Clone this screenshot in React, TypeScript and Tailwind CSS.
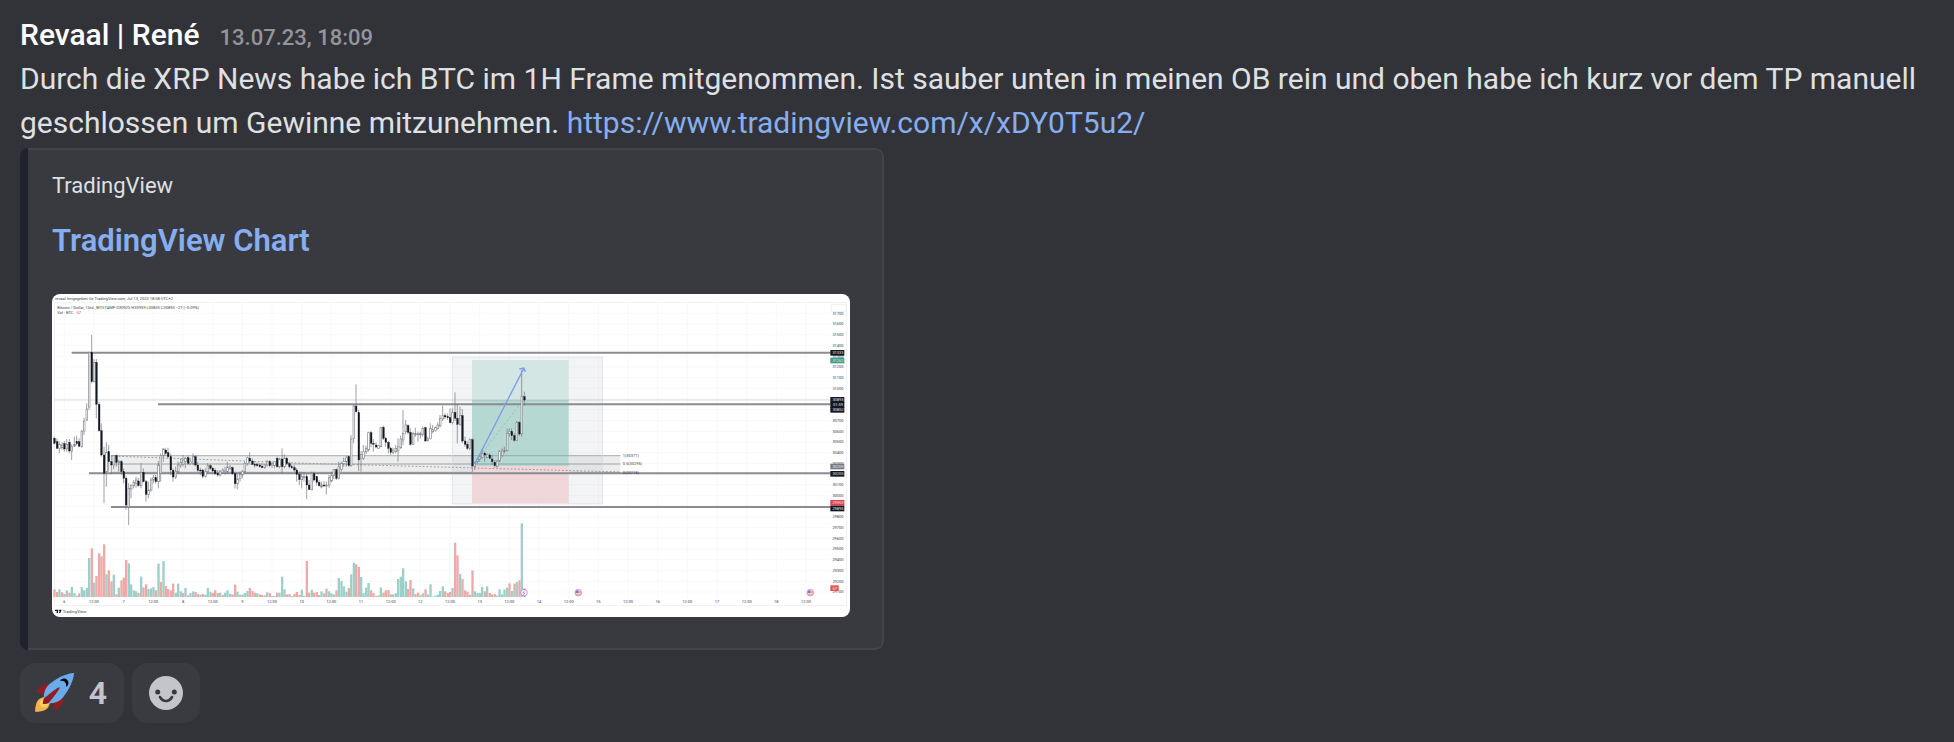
import React from "react";

type Candle = [open: number, high: number, low: number, close: number];

// Hourly candles, y grows downwards
const candles: Candle[] = [
  [460, 455, 478, 475], [470, 460, 492, 490], [490, 470, 505, 478], [488, 472, 495, 480],
  [476, 468, 500, 492], [492, 462, 500, 478], [472, 462, 505, 498], [498, 478, 525, 485],
  [483, 455, 486, 478], [470, 452, 482, 476], [470, 460, 485, 484], [484, 435, 488, 440],
  [438, 398, 450, 408], [405, 355, 408, 372], [366, 200, 375, 203], [203, 150, 295, 290],
  [290, 222, 292, 232], [232, 222, 400, 358], [358, 350, 440, 437], [437, 415, 515, 510],
  [510, 485, 655, 565], [560, 472, 605, 502], [500, 480, 560, 530], [530, 510, 568, 540],
  [540, 510, 552, 512], [512, 508, 545, 532], [532, 525, 560, 530], [530, 525, 570, 560],
  [560, 550, 595, 580], [580, 572, 675, 660], [666, 595, 720, 610], [612, 600, 640, 600],
  [602, 585, 610, 592], [595, 575, 608, 585], [588, 578, 605, 602], [602, 535, 610, 562],
  [562, 550, 592, 590], [590, 585, 650, 628], [628, 590, 640, 615], [615, 578, 620, 585],
  [585, 570, 595, 578], [578, 570, 596, 590], [590, 528, 610, 540], [565, 505, 590, 512],
  [512, 490, 530, 492], [495, 490, 512, 505], [503, 488, 520, 515], [515, 505, 570, 555],
  [556, 550, 590, 576], [576, 545, 582, 560], [560, 530, 565, 540], [540, 520, 548, 532],
  [538, 510, 545, 525], [530, 515, 550, 520], [518, 512, 540, 535], [535, 520, 540, 530],
  [535, 505, 540, 515], [515, 510, 545, 540], [540, 530, 560, 556], [555, 548, 570, 558],
  [555, 552, 580, 574], [574, 550, 578, 560], [560, 535, 565, 542], [542, 538, 555, 550],
  [550, 545, 562, 558], [556, 550, 570, 566], [566, 555, 575, 570], [570, 555, 575, 560],
  [562, 550, 566, 555], [562, 545, 568, 558], [560, 530, 566, 546], [550, 540, 555, 546],
  [548, 545, 570, 566], [566, 560, 610, 596], [596, 565, 612, 582], [580, 560, 590, 568],
  [570, 555, 580, 560], [560, 530, 565, 535], [535, 515, 542, 518], [520, 502, 535, 528],
  [528, 520, 540, 538], [538, 530, 548, 540], [538, 532, 545, 542], [540, 535, 548, 545],
  [544, 535, 550, 548], [548, 538, 552, 540], [540, 525, 545, 530], [530, 525, 545, 542],
  [540, 530, 548, 535], [542, 530, 550, 530], [520, 515, 548, 545], [545, 518, 550, 522],
  [522, 490, 565, 545], [545, 508, 550, 520], [520, 515, 540, 536], [536, 530, 550, 545],
  [545, 540, 552, 548], [548, 540, 560, 555], [555, 550, 590, 568], [568, 560, 600, 584],
  [584, 560, 610, 575], [578, 562, 590, 575], [575, 565, 642, 600], [600, 585, 615, 614],
  [614, 560, 616, 566], [566, 560, 590, 585], [575, 575, 602, 592], [592, 585, 605, 602],
  [606, 590, 610, 600], [600, 588, 606, 602], [602, 590, 628, 600], [600, 570, 608, 578],
  [588, 560, 592, 572], [572, 552, 582, 554], [554, 550, 585, 580], [580, 530, 583, 545],
  [553, 530, 560, 535], [535, 518, 545, 530], [530, 512, 545, 518], [515, 512, 545, 542],
  [542, 450, 545, 462], [460, 360, 475, 363], [363, 298, 383, 380], [383, 375, 558, 525],
  [520, 498, 560, 508], [520, 480, 525, 500], [500, 482, 508, 490], [495, 440, 500, 443],
  [443, 438, 487, 475], [475, 462, 500, 478], [480, 472, 490, 486], [490, 480, 492, 482],
  [485, 425, 487, 428], [427, 422, 465, 460], [460, 455, 485, 472], [472, 468, 505, 490],
  [490, 485, 510, 502], [502, 488, 508, 495], [500, 480, 505, 490], [498, 460, 530, 485],
  [488, 452, 492, 462], [465, 375, 480, 445], [440, 405, 448, 420], [422, 418, 448, 442],
  [442, 430, 482, 478], [478, 440, 480, 445], [450, 428, 455, 445], [448, 440, 470, 446],
  [450, 440, 460, 445], [448, 425, 455, 430], [428, 425, 470, 468], [466, 455, 470, 462],
  [460, 415, 463, 430], [440, 420, 445, 434], [436, 425, 440, 427], [430, 412, 434, 420],
  [422, 390, 428, 400], [402, 362, 408, 392], [392, 385, 402, 396], [395, 385, 405, 398],
  [398, 370, 415, 413], [412, 370, 418, 382], [382, 322, 408, 400], [400, 357, 475, 418],
  [418, 365, 422, 392], [392, 372, 475, 468], [468, 455, 485, 478], [478, 470, 495, 490],
  [490, 460, 496, 464], [464, 460, 562, 543], [545, 530, 555, 535], [530, 518, 535, 522],
  [522, 510, 530, 515], [518, 492, 522, 505], [505, 500, 530, 510], [518, 505, 520, 508],
  [510, 505, 522, 520], [522, 510, 540, 530], [532, 525, 548, 542], [545, 525, 548, 528],
  [528, 495, 532, 500], [512, 490, 518, 498], [500, 485, 505, 495], [497, 430, 500, 445],
  [445, 430, 455, 440], [440, 430, 465, 452], [452, 445, 470, 466], [466, 408, 468, 412],
  [412, 408, 452, 447], [445, 255, 455, 335], [335, 320, 362, 345],
];

// Volume per candle, negative for a falling hour
const volumes = [
  -23, -15, 23, -14, -9, 20, -13, 30, 12, 4, -11, 30, 20, 27, 117, -146, 43, -63, -131, -122,
  -158, 68, -80, -47, 67, -8, 28, -50, -58, -111, 101, 38, 20, 17, -12, 61, -29, -38, 24, 26,
  30, -20, 100, -45, 108, -33, -24, -20, -40, 13, 40, 17, -12, 27, -5, 12, 17, -15, -9, 7,
  -9, 7, 27, 16, -12, -20, -12, 13, -6, 13, 20, 10, -8, -37, 16, 7, 7, 12, 18, -27,
  -18, -13, 11, -8, -6, -5, 14, -12, 3, 3, -13, 13, 61, 23, -8, -9, 3, -9, -15, -6,
  22, 3, -108, -13, 22, -13, -15, -6, 17, 11, -25, 17, 11, 8, -20, 57, 48, 32, 16, -27,
  68, 103, -98, -90, 60, 12, 28, 42, -20, -12, -3, 5, 29, -13, -20, -21, -8, 8, 11, 54,
  61, 86, 47, -24, -51, 26, -9, -13, 5, 11, -23, 8, 38, 2, 4, 7, 18, 32, -17, -12,
  -15, 27, -163, -125, 69, -54, -20, -16, 7, -80, 17, 12, 12, 30, -17, 32, -12, -8, -8, 4,
  23, 8, 23, 28, -41, 18, -40, 45, -50, 221, -26,
];

const prices = Array.from({ length: 27 }, (_, i) => 31700 - i * 100);
// Prices hidden behind a tag on the axis
const coveredPrices = [30900, 30800, 30200, 29900];

const columns = Array.from({ length: 26 }, (_, i) => i);

const levels = [
  { x: 95, y: 203 },
  { x: 354, y: 358 },
  { x: 147, y: 565 },
  { x: 213, y: 666 },
];

const tags = [
  { y: 195, text: "31333", fill: "#131722" },
  { y: 218, text: "31262", fill: "#3f9d85" },
  { y: 336, text: "30893", fill: "#131722" },
  { y: 351, text: "51:59", fill: "#131722" },
  { y: 366, text: "30852", fill: "#131722" },
  { y: 536, text: "30259", fill: "#787b86" },
  { y: 558, text: "30205", fill: "#131722" },
  { y: 645, text: "29953", fill: "#e5404c" },
  { y: 662, text: "29895", fill: "#131722" },
];

const candleX = (index: number) => Math.round(43.3 + index * 7.417);

const FlagMarker: React.FC<{ x: number }> = ({ x }) => (
  <g>
    <circle cx={x} cy={923} r={10} fill="#fff" stroke="#e0566a" strokeWidth={2} />
    <path d={`M${x - 7} 919h14M${x - 8} 923h16M${x - 7} 928h14`} stroke="#e0566a" strokeWidth={2} />
    <path d={`M${x - 8} 924v-4q2-5 8-5v9z`} fill="#4a86e8" />
  </g>
);

const TradingChart: React.FC = () => (
  <svg
    viewBox="36 27 2394 969"
    role="img"
    aria-label="Bitcoin / Dollar chart"
    className="block w-full rounded-lg bg-white font-['Roboto',sans-serif]"
  >
    {/* Grid */}
    <g stroke="#f6f6f7" strokeWidth={2}>
      {columns.map((column) => (
        <path key={column} d={`M${73 + column * 89} 53V942`} />
      ))}
      {prices.map((price, i) => (
        <path key={price} d={`M44 ${Math.round(85 + i * 32.15)}H2372`} />
      ))}
    </g>
    <rect x={44} y={53} width={2376} height={908} fill="none" stroke="#ececee" strokeWidth={2} />

    {/* Fibonacci zone */}
    <rect x={214} y={512} width={1527} height={50} fill="#eceeed" />
    <path d="M214 512H1741M214 537H1741M214 562H1741" stroke="#b9bbba" strokeWidth={4} />

    {/* Range box and position */}
    <rect x={1237} y={216} width={451} height={441} fill="#9598a1" fillOpacity={0.11} stroke="#d9d9e6" strokeWidth={2} />
    <rect x={1296} y={225} width={290} height={120} fill="#d3e6e4" />
    <rect x={1296} y={345} width={290} height={198} fill="#b6d8d2" />
    <rect x={1296} y={543} width={290} height={112} fill="#efd6d9" />
    <path d="M1296 512H1586M1296 537H1586" stroke="#131722" strokeOpacity={0.18} strokeWidth={4} />
    <path d="M44 345H2372" stroke="#131722" strokeOpacity={0.14} strokeWidth={3} />
    <path d="M214 513L800 535L1741 561" stroke="#9a9a9a" strokeWidth={3} strokeDasharray="5 6" fill="none" />
    <path d="M1296 543L1450 345" stroke="#8fb3a8" strokeWidth={2} strokeDasharray="7 6" />

    {/* Volume */}
    {volumes.map((volume, i) => (
      <rect
        key={i}
        x={candleX(i) - 3}
        y={936 - Math.abs(volume)}
        width={7}
        height={Math.abs(volume)}
        fill={volume < 0 ? "#eeaaa8" : "#9dd0c9"}
      />
    ))}

    {/* Price levels */}
    {levels.map((level) => (
      <path
        key={level.y}
        d={`M${level.x} ${level.y}H2372`}
        stroke="#8b8c93"
        strokeWidth={6}
      />
    ))}

    {/* Candles */}
    {candles.map(([open, high, low, close], i) => {
      const falling = close > open;
      return (
        <g key={i}>
          <path d={`M${candleX(i)} ${high}V${low}`} stroke="#6f7178" strokeWidth={2} />
          <rect
            x={candleX(i) - 2}
            y={Math.min(open, close)}
            width={5}
            height={Math.max(Math.abs(close - open), 3)}
            fill={falling ? "#131722" : "#fff"}
            stroke={falling ? "#131722" : "#85878d"}
            strokeWidth={falling ? 1 : 2}
          />
        </g>
      );
    })}

    <path
      d="M1304 538L1451 251M1438 252L1452 249L1456 261"
      fill="none"
      stroke="#7f9bea"
      strokeWidth={4}
    />

    {/* Legend */}
    <g fill="#40434c" fontSize={12}>
      <text x={45} y={45}>revaal freigegeben für TradingView.com, Jul 13, 2023 18:08 UTC+2</text>
      <text x={52} y={71}>Bitcoin / Dollar, 1Std., BITSTAMP  O30925  H30959  L30830  C30893  −27 (−0.09%)</text>
      <text x={52} y={87}>
        Vol · BTC <tspan fill="#e5404c" dx={6}>57</tspan>
      </text>
      <text x={1748} y={516}>1(30371)</text>
      <text x={1748} y={541}>0.5(30295)</text>
      <text x={1748} y={566}>0(30218)</text>
    </g>

    {/* Time axis */}
    <g fill="#40434c" fontSize={12} textAnchor="middle">
      {columns.map((column) => (
        <text key={column} x={73 + column * 89} y={953}>
          {column % 2 === 0 ? 6 + column / 2 : "12:00"}
        </text>
      ))}
    </g>

    {/* Price axis */}
    <rect x={2374} y={58} width={44} height={22} rx={3} fill="#fff" stroke="#e6e6e8" strokeWidth={2} />
    <g fontSize={12} textAnchor="middle">
      {prices.map((price, i) =>
        coveredPrices.includes(price) ? null : (
          <text key={price} x={2394} y={Math.round(89 + i * 32.15)} fill="#40434c">
            {price}
          </text>
        )
      )}
      {tags.map((tag) => (
        <g key={tag.y}>
          <rect x={2371} y={tag.y} width={42} height={17} fill={tag.fill} />
          <text x={2394} y={tag.y + 13} fill="#e4e5e8">{tag.text}</text>
        </g>
      ))}
      <rect x={2371} y={901} width={25} height={17} fill="#e0544f" />
      <text x={2384} y={914} fill="#fff">57</text>
    </g>

    {/* Event markers */}
    <circle cx={1452} cy={923} r={10} fill="#fff" stroke="#a05cc0" strokeWidth={2} />
    <path d="M1455 916l-7 8h7l-6 7" fill="none" stroke="#a05cc0" strokeWidth={2} />
    <FlagMarker x={1615} />
    <FlagMarker x={2311} />

    <path d="M45 974h9v10h-4v-6h-5zM56 974h3v4h-3zM60 974h5l-4 10h-4z" fill="#131722" />
    <text x={68} y={984} fontSize={13} fill="#40434c">TradingView</text>
  </svg>
);

const RocketIcon: React.FC = () => (
  <svg viewBox="0 0 36 36" className="size-10" aria-hidden="true">
    <path fill="#8f1e24" d="M1 17l8-7 16 1 1 16-7 8s.001-5.999-6-12-12-6-12-6z" />
    <path fill="#f6b04e" d="M.973 35s-.036-7.979 2.985-11S15 21.187 15 21.187 14.999 29 11.999 32c-3 3-11.026 3-11.026 3z" />
    <circle fill="#f9ce60" cx="8.999" cy="27" r="4" />
    <path fill="#6aabe9" d="M35.999 0s-10 0-22 10c-6 5-6 14-4 16s11 2 16-4c10-12 10-22 10-22z" />
    <path fill="#000" d="M26.999 5c-1.623 0-3.013.971-3.641 2.36.502-.227 1.055-.36 1.641-.36 2.209 0 4 1.791 4 4 0 .586-.133 1.139-.359 1.64 1.389-.627 2.359-2.017 2.359-3.64 0-2.209-1.791-4-4-4z" />
    <path fill="#8f1e24" d="M8 28s0-4 1-5 13.001-10.999 14-10-9.001 13-10.001 14S8 28 8 28z" />
  </svg>
);

const SmileyIcon: React.FC = () => (
  <svg viewBox="0 0 34 34" className="size-[34px]" aria-hidden="true">
    <circle cx="17" cy="17" r="17" fill="#c4c5ca" />
    <circle cx="8.7" cy="16" r="2.5" fill="#393a3f" />
    <circle cx="25.3" cy="16" r="2.5" fill="#393a3f" />
    <path d="M11 21q2.300 4 6 4t6-4" fill="none" stroke="#393a3f" strokeWidth="2.600" strokeLinecap="round" />
  </svg>
);

const LinkEmbed: React.FC = () => (
  <article className="mt-[3px] w-full max-w-[864px] overflow-hidden rounded-lg bg-[#1f212c] pl-2">
    <div className="rounded-r-lg border-2 border-l-0 border-[#434449] bg-[#393a3f] pt-5 pr-8 pb-[31px] pl-6">
      <div className="text-[22px] leading-8 text-[#dfe0e3]">TradingView</div>
      <a
        href="https://www.tradingview.com/x/xDY0T5u2/"
        className="mt-[19px] block text-[31px] leading-10 font-semibold text-[#86aef0]"
      >
        TradingView Chart
      </a>
      <div className="mt-[33px]">
        <TradingChart />
      </div>
    </div>
  </article>
);

const App: React.FC = () => {
  return (
    <main className="min-h-screen bg-[#323338] px-5 pt-[13px] pb-4 font-['Roboto',sans-serif]">
      <header className="flex h-11 items-baseline gap-5">
        <h3 className="text-[30px] leading-[44px] font-medium text-white">Revaal | René</h3>
        <time dateTime="2023-07-13T18:09" className="text-[22px] font-medium text-[#94959b]">
          13.07.23, 18:09
        </time>
      </header>
      <p className="text-[30px] leading-[44px] text-[#dfe0e3]">
        Durch die XRP News habe ich BTC im 1H Frame mitgenommen. Ist sauber unten in meinen OB rein
        und oben habe ich kurz vor dem TP manuell geschlossen um Gewinne mitzunehmen.{" "}
        <a href="https://www.tradingview.com/x/xDY0T5u2/" className="text-[#86aef0]">
          https://www.tradingview.com/x/xDY0T5u2/
        </a>
      </p>

      <LinkEmbed />

      {/* Reactions */}
      <div className="mt-[13px] flex gap-2">
        <button
          type="button"
          className="flex h-[60px] items-center gap-[14px] rounded-2xl bg-[#3a3b40] pr-4 pl-[14px] text-[32px] font-semibold text-[#c4c5ca]"
        >
          <RocketIcon />
          <span className="w-5 text-center">4</span>
        </button>
        <button
          type="button"
          aria-label="Add reaction"
          className="flex h-[60px] w-[68px] items-center justify-center rounded-2xl bg-[#3a3b40]"
        >
          <SmileyIcon />
        </button>
      </div>
    </main>
  );
};

export default App;
